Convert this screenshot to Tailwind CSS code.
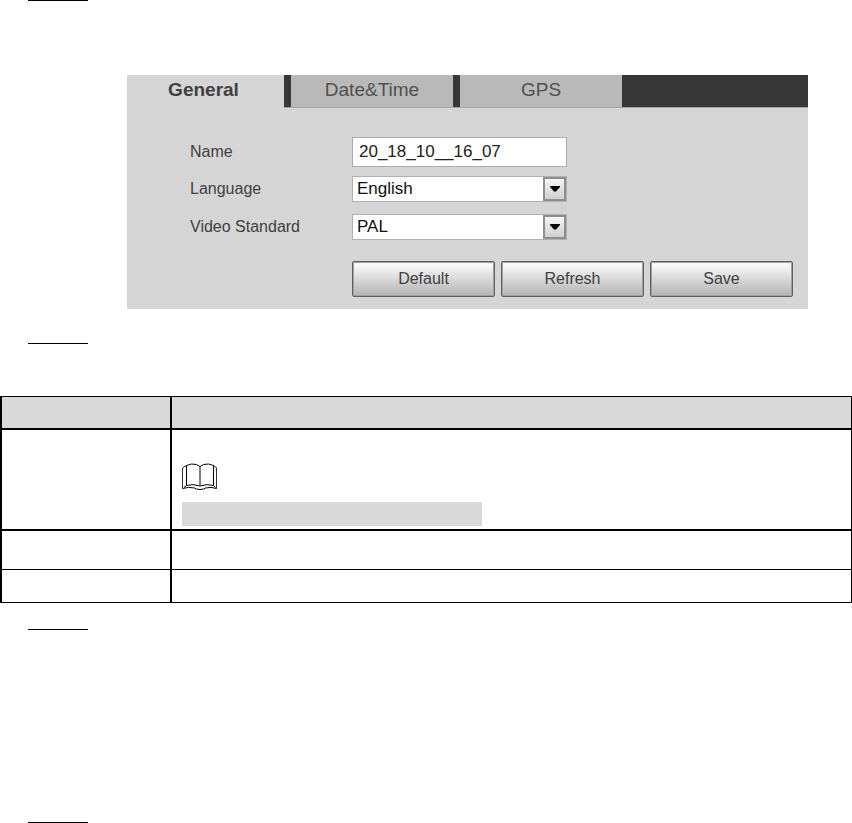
<!DOCTYPE html>
<html lang="en">
<head>
    <meta charset="UTF-8">
    <meta name="viewport" content="width=device-width, initial-scale=1.0">
    <title>General Setup</title>
    <script src="https://cdn.jsdelivr.net/npm/@tailwindcss/browser@4"></script>
</head>
<body class="bg-white font-['Liberation_Sans',Arial,sans-serif] text-[#404040]">

    <hr class="ml-7 w-15 border-black">

    <!-- Settings panel -->
    <section class="mt-[74px] mr-11 ml-[127px] bg-[#d5d5d5]">
        <nav class="flex h-[33px] gap-[7px] border-b border-[#a0a0a0] bg-[#373737] text-[19px] leading-[30px]">
            <a href="#general" class="-mb-px w-[157px] bg-[#d5d5d5] pr-1 text-center font-bold">General</a>
            <a href="#datetime" class="w-[162px] bg-[#b9b9b9] text-center text-[#505050]">Date&amp;Time</a>
            <a href="#gps" class="w-[162px] bg-[#b9b9b9] text-center text-[#505050]">GPS</a>
        </nav>

        <form class="pt-[29px] pb-3 pl-[63px] text-base">
            <div class="flex items-center">
                <label for="name" class="w-[162px]">Name</label>
                <input id="name" type="text" value="20_18_10__16_07" class="h-[30px] w-[215px] border border-[#acacb0] bg-white px-1.5 text-[17px] text-[#202020]">
            </div>

            <div class="mt-[9px] flex items-center">
                <label for="language" class="w-[162px]">Language</label>
                <div class="relative">
                    <select id="language" class="block h-[26px] w-[215px] appearance-none border border-[#b0b0b8] bg-white px-1 text-[17px] leading-6 text-[#101010]">
                        <option>English</option>
                        <option>SimpChinese</option>
                    </select>
                    <span class="pointer-events-none absolute top-px right-px flex h-6 w-[23px] items-center justify-center border-2 border-[#8e8e92] bg-linear-to-b from-[#f6f6f6] to-[#cfcfcf]">
                        <svg class="h-[6px] w-[10px]" viewBox="0 0 10 6"><path d="M0 0h10v1L6 5.5H4L0 1z" fill="#000"/></svg>
                    </span>
                </div>
            </div>

            <div class="mt-3 flex items-center">
                <label for="standard" class="w-[162px]">Video Standard</label>
                <div class="relative">
                    <select id="standard" class="block h-[26px] w-[215px] appearance-none border border-[#b0b0b8] bg-white px-1 text-[17px] leading-6 text-[#101010]">
                        <option>PAL</option>
                        <option>NTSC</option>
                    </select>
                    <span class="pointer-events-none absolute top-px right-px flex h-6 w-[23px] items-center justify-center border-2 border-[#8e8e92] bg-linear-to-b from-[#f6f6f6] to-[#cfcfcf]">
                        <svg class="h-[6px] w-[10px]" viewBox="0 0 10 6"><path d="M0 0h10v1L6 5.5H4L0 1z" fill="#000"/></svg>
                    </span>
                </div>
            </div>

            <div class="mt-[21px] ml-[162px] flex gap-[6px]">
                <button type="button" class="h-9 w-[143px] rounded-xs border border-[#606060] bg-linear-to-b from-white to-[#b4b2b4] shadow-[inset_0_0_0_1px_#a0a0a0]">Default</button>
                <button type="button" class="h-9 w-[143px] rounded-xs border border-[#606060] bg-linear-to-b from-white to-[#b4b2b4] shadow-[inset_0_0_0_1px_#a0a0a0]">Refresh</button>
                <button type="submit" class="h-9 w-[143px] rounded-xs border border-[#606060] bg-linear-to-b from-white to-[#b4b2b4] shadow-[inset_0_0_0_1px_#a0a0a0]">Save</button>
            </div>
        </form>
    </section>

    <hr class="mt-[34px] ml-7 w-15 border-black">

    <!-- Parameter table -->
    <table class="mt-[52px] w-full table-fixed border-separate border-spacing-0 border-t border-r border-black">
        <thead>
            <tr class="h-[33px] bg-[#d9d9d9]">
                <th class="w-[170px] border-b-2 border-l-2 border-black p-0"></th>
                <th class="border-b-2 border-l-2 border-black p-0"></th>
            </tr>
        </thead>
        <tbody>
            <tr>
                <td class="border-b-2 border-l-2 border-black p-0"></td>
                <td class="border-b-2 border-l-2 border-black pt-[33px] pr-0 pb-[3px] pl-[10px]">
                    <!-- Open book -->
                    <svg class="h-[27px] w-[35px]" viewBox="0 0 35 27" fill="none" stroke="#000">
                        <path d="M4.500 3v19.500M31.500 3v19.500M18 3.500v19"/>
                        <path d="M.5 5v20.500M34.500 5v20.500" stroke="#333"/>
                        <path d="M.5 5Q2 3.500 4.500 2.500Q9.500 0 14.500 1.500L18 3.500L21.500 1.500Q26.500 0 31.500 2.500Q33.500 3.500 34.500 5"/>
                        <path d="M2 24.500L4.500 22.500Q11 20.500 18 23Q25 20.500 31.500 22.500L33.500 24.500"/>
                        <path d="M.5 25.500Q7 23.500 12.500 25Q14 26.500 18 26.500Q22 26.500 23.500 25Q29 23.500 34.500 25.500"/>
                    </svg>
                    <div class="mt-3 h-6 w-[300px] bg-[#d9d9d9]"></div>
                </td>
            </tr>
            <tr class="h-[39px]">
                <td class="border-b border-l-2 border-black p-0"></td>
                <td class="border-b border-l-2 border-black p-0"></td>
            </tr>
            <tr class="h-[33px]">
                <td class="border-b border-l-2 border-black p-0"></td>
                <td class="border-b border-l-2 border-black p-0"></td>
            </tr>
        </tbody>
    </table>

    <hr class="mt-[26px] ml-7 w-15 border-black">
    <hr class="mt-48 ml-7 w-15 border-black">

</body>
</html>
